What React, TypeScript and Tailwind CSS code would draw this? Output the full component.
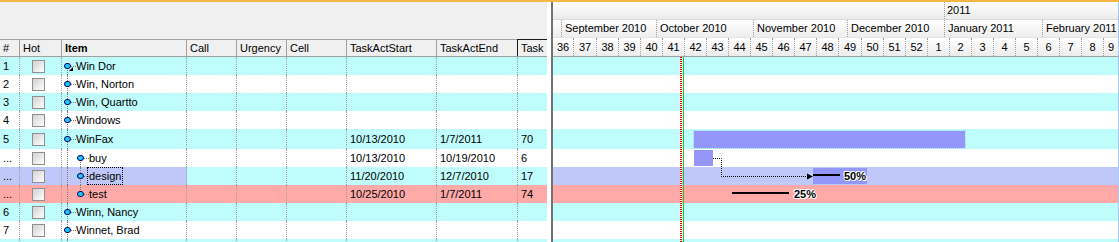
import React from 'react';

type Row = {
  n: string;
  name: string;
  lvl: 0 | 1;
  bg: string;
  tall?: boolean;
  sel?: boolean;
  first?: boolean;
  kid?: 'first' | 'mid' | 'last';
  start?: string;
  end?: string;
  task?: string;
};

const CYAN = 'bg-[#bffcfc]';
const WHITE = 'bg-white';
const PINK = 'bg-[#ffa9a9]';
const SEL = 'bg-[#bfc8f8]';

const rows: Row[] = [
  { n: '1', name: 'Win Dor', lvl: 0, bg: CYAN, first: true },
  { n: '2', name: 'Win, Norton', lvl: 0, bg: WHITE },
  { n: '3', name: 'Win, Quartto', lvl: 0, bg: CYAN },
  { n: '4', name: 'Windows', lvl: 0, bg: WHITE },
  { n: '5', name: 'WinFax', lvl: 0, bg: CYAN, tall: true, start: '10/13/2010', end: '1/7/2011', task: '70' },
  { n: '...', name: 'buy', lvl: 1, bg: WHITE, kid: 'first', start: '10/13/2010', end: '10/19/2010', task: '6' },
  { n: '...', name: 'design', lvl: 1, bg: CYAN, sel: true, kid: 'mid', start: '11/20/2010', end: '12/7/2010', task: '17' },
  { n: '...', name: 'test', lvl: 1, bg: PINK, kid: 'last', start: '10/25/2010', end: '1/7/2011', task: '74' },
  { n: '6', name: 'Winn, Nancy', lvl: 0, bg: CYAN },
  { n: '7', name: 'Winnet, Brad', lvl: 0, bg: WHITE },
  { n: '', name: '', lvl: 0, bg: CYAN },
];

const months = [
  { label: '', w: 'w-[8px]', sep: false },
  { label: 'September 2010', w: 'w-[95px]', sep: true },
  { label: 'October 2010', w: 'w-[97px]', sep: true },
  { label: 'November 2010', w: 'w-[94px]', sep: true },
  { label: 'December 2010', w: 'w-[97px]', sep: true },
  { label: 'January 2011', w: 'w-[98px]', sep: true },
  { label: 'February 2011', w: 'flex-1', sep: true },
];

// week columns, 36..52 then 1..9
const weeks = [36, 37, 38, 39, 40, 41, 42, 43, 44, 45, 46, 47, 48, 49, 50, 51, 52, 1, 2, 3, 4, 5, 6, 7, 8, 9].map((n, i) => ({
  n,
  w: i === 0 ? 'w-[20px]' : i === 1 || i === 13 ? 'w-[23px]' : i === 25 ? 'flex-1' : 'w-[22px]',
  sep: i > 0,
}));

const Check = () => (
  <span className="block w-[13px] h-[13px] border border-[#8f8f8f] bg-linear-to-br from-[#d2d2d2] to-white" />
);

const Node = () => (
  <span className="relative z-10 block w-[7px] h-[6px] shrink-0 rounded-full border border-[#00005a] bg-[#22c6ff]" />
);

const cell = 'h-full shrink-0 border-r border-dotted border-[#a0a0a0] flex items-center overflow-hidden whitespace-nowrap';

const GridRow = ({ r }: { r: Row }) => {
  const lead = r.sel ? SEL : '';
  return (
    <div className={`flex shrink-0 ${r.tall ? 'h-[20px]' : 'h-[18px]'} ${r.bg}`}>
      <div className={`${cell} w-[20px] pl-[3px] ${lead}`}>{r.n}</div>
      <div className={`${cell} w-[42px] pl-[12px] ${lead}`}>
        <Check />
      </div>
      <div className={`${cell} w-[125px] relative ${lead} ${r.lvl ? 'pl-[15px]' : 'pl-[2px]'}`}>
        {/* tree lines */}
        <span className={`absolute left-[5px] bottom-0 border-l border-dotted border-[#7c7c7c] ${r.first ? 'top-[9px]' : 'top-0'}`} />
        {r.kid && (
          <span
            className={`absolute left-[18px] border-l border-dotted border-[#7c7c7c] ${
              r.kid === 'first' ? 'top-[9px] bottom-0' : r.kid === 'last' ? 'top-0 h-[9px]' : 'top-0 bottom-0'
            }`}
          />
        )}
        {r.name && (
          <>
            <Node />
            {r.first && (
              <span className="absolute left-[7px] top-[10px] w-0 h-0 border-l-[4px] border-l-transparent border-b-[4px] border-b-black" />
            )}
            <span className="w-[5px] shrink-0 border-t border-dotted border-[#7c7c7c]" />
            {r.sel ? (
              <span className="-ml-[2px] h-full flex items-center px-[1px] border border-dotted border-black">{r.name}</span>
            ) : (
              <span>{r.name}</span>
            )}
          </>
        )}
      </div>
      <div className={`${cell} w-[50px]`} />
      <div className={`${cell} w-[50px]`} />
      <div className={`${cell} w-[60px]`} />
      <div className={`${cell} w-[90px] pl-[3px]`}>{r.start}</div>
      <div className={`${cell} w-[81px] pl-[3px]`}>{r.end}</div>
      <div className="h-full flex-1 flex items-center pl-[3px]">{r.task}</div>
    </div>
  );
};

const head = 'h-full shrink-0 border-r border-[#a0a0a0] flex items-center pl-[3px] whitespace-nowrap overflow-hidden';

const Grid = () => (
  <div className="w-[547px] shrink-0 flex flex-col overflow-hidden">
    <div className="h-[37px] shrink-0 bg-[#f0f0f0]" />
    <div className="h-[18px] shrink-0 flex border-y border-[#a0a0a0] bg-[#f0f0f0]">
      <div className={`${head} w-[20px]`}>#</div>
      <div className={`${head} w-[42px]`}>Hot</div>
      <div className={`${head} w-[125px] font-bold`}>Item</div>
      <div className={`${head} w-[50px]`}>Call</div>
      <div className={`${head} w-[50px]`}>Urgency</div>
      <div className={`${head} w-[60px]`}>Cell</div>
      <div className={`${head} w-[90px]`}>TaskActStart</div>
      <div className={`${head} w-[80px] border-r-0`}>TaskActEnd</div>
      <div className="h-[17px] -mt-px flex-1 border-l border-t border-[#1a1a1a] flex items-center pl-[3px] overflow-hidden">Task</div>
    </div>
    {rows.map((r, i) => (
      <GridRow key={i} r={r} />
    ))}
  </div>
);

const halo = '[text-shadow:1px_0_#fff,-1px_0_#fff,0_1px_#fff,0_-1px_#fff,1px_1px_#fff,-1px_-1px_#fff]';

const ChartRow = ({ r, i }: { r: Row; i: number }) => (
  <div className={`relative shrink-0 ${r.tall ? 'h-[20px]' : 'h-[18px]'} ${r.sel ? SEL : r.bg}`}>
    {i === 4 && (
      <div className="absolute left-[140px] top-[1px] w-[273px] h-[19px] border border-dotted border-[#9cd6ee]">
        <div className="h-full bg-[#9497f9]" />
      </div>
    )}
    {i === 5 && <div className="absolute left-[141px] top-[1px] w-[19px] h-[16px] bg-[#9497f9]" />}
    {i === 6 && (
      <>
        <div className="absolute left-[260px] top-[1px] w-[54px] h-[16px] bg-[#9497f9]" />
        <div className="absolute left-[260px] top-[7px] w-[27px] h-[2px] bg-black" />
        <div className={`absolute left-[291px] top-0 h-full flex items-center font-bold ${halo}`}>50%</div>
      </>
    )}
    {i === 7 && (
      <>
        <div className="absolute left-[179px] top-[7px] w-[57px] h-[2px] bg-black" />
        <div className={`absolute left-[241px] top-0 h-full flex items-center font-bold ${halo}`}>25%</div>
      </>
    )}
  </div>
);

const Chart = () => (
  <div className="flex-1 flex flex-col overflow-hidden border-r border-[#a9c8ee]">
    <div className="h-[18px] shrink-0 flex bg-linear-to-b from-white to-[#ebebeb] border-b border-[#d8d8d8]">
      <div className="w-[391px] shrink-0" />
      <div className="flex-1 flex items-center pl-[2px] border-l border-dotted border-[#a0a0a0]">2011</div>
    </div>
    <div className="h-[18px] shrink-0 flex bg-linear-to-b from-white to-[#ededed] border-b border-[#e4e4e4]">
      {months.map((m, i) => (
        <div
          key={i}
          className={`${m.w} shrink-0 h-full flex items-center pl-[3px] whitespace-nowrap overflow-hidden ${
            m.sep ? 'border-l border-dotted border-[#a0a0a0]' : ''
          }`}
        >
          {m.label}
        </div>
      ))}
    </div>
    <div className="h-[19px] shrink-0 flex bg-linear-to-b from-white to-[#ececec] border-b border-[#a0a0a0]">
      {weeks.map((w, i) => (
        <div
          key={i}
          className={`${w.w} shrink-0 h-full flex items-center justify-center overflow-hidden ${
            w.sep ? 'border-l border-dotted border-[#a0a0a0]' : ''
          }`}
        >
          {w.n}
        </div>
      ))}
    </div>
    <div className="relative flex-1 flex flex-col overflow-hidden">
      {rows.map((r, i) => (
        <ChartRow key={i} r={r} i={i} />
      ))}
      {/* today markers */}
      <div className="absolute left-[127px] top-0 bottom-0 w-[2px] bg-[repeating-linear-gradient(to_bottom,#e00000_0_1px,#ffffff_1px_2px)]" />
      <div className="absolute left-[130px] top-0 bottom-0 w-px bg-[#12d012]" />
      {/* link buy -> design */}
      <svg className="absolute left-0 top-0 pointer-events-none" width="566" height="185">
        <path d="M160 101.5 H168.5 V119.5 H256" fill="none" stroke="#000" strokeWidth="1" strokeDasharray="1 1" />
        <path d="M254 116.5 L260 119.5 L254 122.5 Z" fill="#000" />
      </svg>
    </div>
  </div>
);

export default function App() {
  return (
    <div className="w-[1119px] h-[242px] overflow-hidden bg-white text-[11px] leading-none text-black font-['Liberation_Sans',Arial,sans-serif]">
      <div className="h-[2px] bg-[#f7b543]" />
      <div className="flex h-[240px]">
        <Grid />
        <div className="w-[4px] shrink-0 bg-white" />
        <div className="w-[2px] shrink-0 bg-[#727272]" />
        <Chart />
      </div>
    </div>
  );
}
